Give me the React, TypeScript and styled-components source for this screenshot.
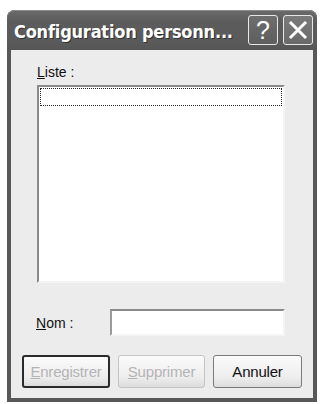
import React from "react";
import styled, { createGlobalStyle } from "styled-components";

const Global = createGlobalStyle`
  html, body { margin: 0; padding: 0; background: #ffffff; }
  body { font-family: "Liberation Sans", Arial, sans-serif; }
`;

const Window = styled.div`
  margin: 10px 0 0 7px;
  width: 310px;
  height: 392px;
  background: #585858;
  border-radius: 8px 8px 0 0;
  display: flex;
  flex-direction: column;
  box-shadow: inset 0 1px 0 #8a8a8a;
`;

const TitleBar = styled.div`
  height: 40px;
  display: flex;
  align-items: center;
  padding: 0 4px 0 7px;
  background: linear-gradient(#6a6a6a, #5c5c5c 30%, #5a5a5a 80%, #555 100%);
  border-radius: 8px 8px 0 0;
  box-shadow: inset 0 1px 0 #8c8c8c;
`;

const Title = styled.div`
  flex: 1;
  color: #ffffff;
  font-family: "DejaVu Sans Condensed", "Liberation Sans Narrow", "DejaVu Sans", sans-serif;
  font-weight: bold;
  font-size: 18px;
  letter-spacing: -0.2px;
  white-space: nowrap;
  text-shadow: 1px 1px 0 #333;
  padding-top: 2px;
`;

const CaptionButton = styled.div<{ $dark?: boolean }>`
  width: 30px;
  height: 30px;
  box-sizing: border-box;
  border: 1px solid #e8e8e8;
  border-radius: 3px;
  background: ${(p) => (p.$dark ? "linear-gradient(#6e6e6e, #5e5e5e)" : "linear-gradient(#7a7a7a, #6a6a6a)")};
  display: flex;
  align-items: center;
  justify-content: center;
  color: #fff;
  margin-left: 5px;
  font-family: "Liberation Sans", sans-serif;
  font-size: 25px;
`;

const Body = styled.div`
  flex: 1;
  margin: 0 4px 4px 4px;
  background: #ececec;
  display: flex;
  flex-direction: column;
`;

const Label = styled.div`
  font-size: 14px;
  color: #111;
  line-height: 16px;
  u { text-decoration: underline; }
`;

const ListLabel = styled(Label)`
  margin: 14px 0 0 26px;
`;

const ListBox = styled.div`
  margin: 5px 0 0 26px;
  width: 248px;
  height: 198px;
  box-sizing: border-box;
  background: #fff;
  border-top: 2px solid #8a8a8a;
  border-left: 2px solid #8a8a8a;
  border-right: 2px solid #f4f4f4;
  border-bottom: 2px solid #f4f4f4;
  padding: 1px;
`;

const FocusRow = styled.div`
  height: 18px;
  box-sizing: border-box;
  border: 1px dotted #222;
`;

const NameRow = styled.div`
  display: flex;
  align-items: center;
  margin: 26px 0 0 25px;
`;

const NameLabel = styled(Label)`
  width: 74px;
`;

const TextInput = styled.div`
  width: 175px;
  height: 27px;
  box-sizing: border-box;
  background: #fff;
  border-top: 2px solid #8a8a8a;
  border-left: 2px solid #9a9a9a;
  border-right: 2px solid #f4f4f4;
  border-bottom: 2px solid #f4f4f4;
`;

const ButtonRow = styled.div`
  display: flex;
  gap: 8px;
  margin: 19px 0 0 11px;
`;

const Button = styled.div<{ $default?: boolean; $disabled?: boolean; $w: number }>`
  width: ${(p) => p.$w}px;
  height: 33px;
  box-sizing: border-box;
  border-radius: 3px;
  border: ${(p) => (p.$default ? "2px solid #2a2a2a" : p.$disabled ? "1px solid #c4c4c4" : "1px solid #7a7a7a")};
  background: linear-gradient(#fbfbfb, #ededed 70%, #dcdcdc);
  display: flex;
  align-items: center;
  justify-content: center;
  font-size: 15px;
  letter-spacing: -0.2px;
  color: ${(p) => (p.$disabled ? "#b4b4b4" : "#111")};
  u { text-decoration: underline; }
`;

export default function App() {
  return (
    <>
      <Global />
      <Window>
        <TitleBar>
          <Title>Configuration personn...</Title>
          <CaptionButton $dark>?</CaptionButton>
          <CaptionButton>
            <svg width="20" height="20" viewBox="0 0 20 20">
              <path d="M3 3 L17 17 M17 3 L3 17" stroke="#fff" strokeWidth="3" strokeLinecap="square" />
            </svg>
          </CaptionButton>
        </TitleBar>
        <Body>
          <ListLabel>
            <u>L</u>iste :
          </ListLabel>
          <ListBox>
            <FocusRow />
          </ListBox>
          <NameRow>
            <NameLabel>
              <u>N</u>om :
            </NameLabel>
            <TextInput />
          </NameRow>
          <ButtonRow>
            <Button $default $disabled $w={88}>
              <span><u>E</u>nregistrer</span>
            </Button>
            <Button $disabled $w={87}>
              <span><u>S</u>upprimer</span>
            </Button>
            <Button $w={89}>Annuler</Button>
          </ButtonRow>
        </Body>
      </Window>
    </>
  );
}
